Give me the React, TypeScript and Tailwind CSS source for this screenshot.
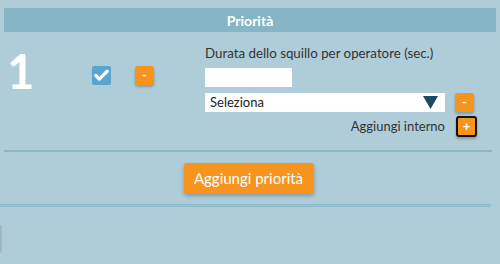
import { Check } from "lucide-react";

const font = { fontFamily: "Lato, 'Open Sans', sans-serif" };

function OrangeButton({ label, outlined }: { label: string; outlined?: boolean }) {
  return (
    <button
      type="button"
      className={
        "flex items-center justify-center rounded-[3px] bg-[#f7941e] text-[13px] font-bold leading-none text-white shadow-[0_2px_3px_rgba(0,0,0,0.25)] " +
        (outlined ? "h-[21px] w-[21px] border-2 border-[#111]" : "h-[19px] w-[19px]")
      }
    >
      {label}
    </button>
  );
}

export default function App() {
  return (
    <div className="relative h-[264px] w-[500px] overflow-hidden bg-[#afcdd8] text-[#333]" style={font}>
      <div className="px-[4px] pt-[8px]">
        <div className="flex h-[24px] items-center justify-center bg-[#86b5c6] text-[14px] font-bold text-white">
          Priorità
        </div>

        <div className="flex h-[118px] items-start">
          <div className="w-[88px] pl-[3px] pt-[16px] text-[47px] font-bold leading-none text-white">1</div>
          <div className="mt-[34px] flex h-[19px] w-[19px] items-center justify-center rounded-[2px] bg-[#5aa5cf]">
            <Check className="h-[17px] w-[17px] text-white" strokeWidth={4.5} />
          </div>
          <div className="ml-[24px] mt-[34px]">
            <OrangeButton label="-" />
          </div>
          <div className="ml-[51px] w-[271px] pt-[13px]">
            <div className="text-[13.3px] leading-[16px]">Durata dello squillo per operatore (sec.)</div>
            <div className="mt-[7px] h-[19px] w-[87px] bg-white" />
            <div className="mt-[6px] flex items-center">
              <div className="flex h-[19px] w-[240px] items-center justify-between bg-white pl-[5px] pr-[7px] text-[13px] text-[#222]">
                <span>Seleziona</span>
                <svg width="15" height="13" viewBox="0 0 15 13">
                  <path d="M0 0 H15 L7.5 13 Z" fill="#1c4a5f" />
                </svg>
              </div>
              <div className="ml-[10px]">
                <OrangeButton label="-" />
              </div>
            </div>
            <div className="mt-[4px] flex items-center justify-end gap-[11px]">
              <span className="text-[13px] text-[#333]">Aggiungi interno</span>
              <div className="-mr-[1px]">
                <OrangeButton label="+" outlined />
              </div>
            </div>
          </div>
        </div>

        <div className="h-[2px] w-[488px] bg-[#8bb7c9]" />

        <div className="flex justify-center pt-[11px]">
          <button
            type="button"
            className="-ml-[3px] h-[31px] w-[130px] rounded-[3px] bg-[#f7941e] text-[15px] text-white shadow-[0_2px_4px_rgba(0,0,0,0.25)]"
          >
            Aggiungi priorità
          </button>
        </div>
      </div>

      <div className="mt-[10px] h-[3px] w-[491px] border-y border-[#8bb7c9] bg-[#a4c6d3]" />

      <div className="mt-[18px] h-[28px] w-[2px] rounded-r-[2px] bg-[#a0b8c2]" />
    </div>
  );
}
